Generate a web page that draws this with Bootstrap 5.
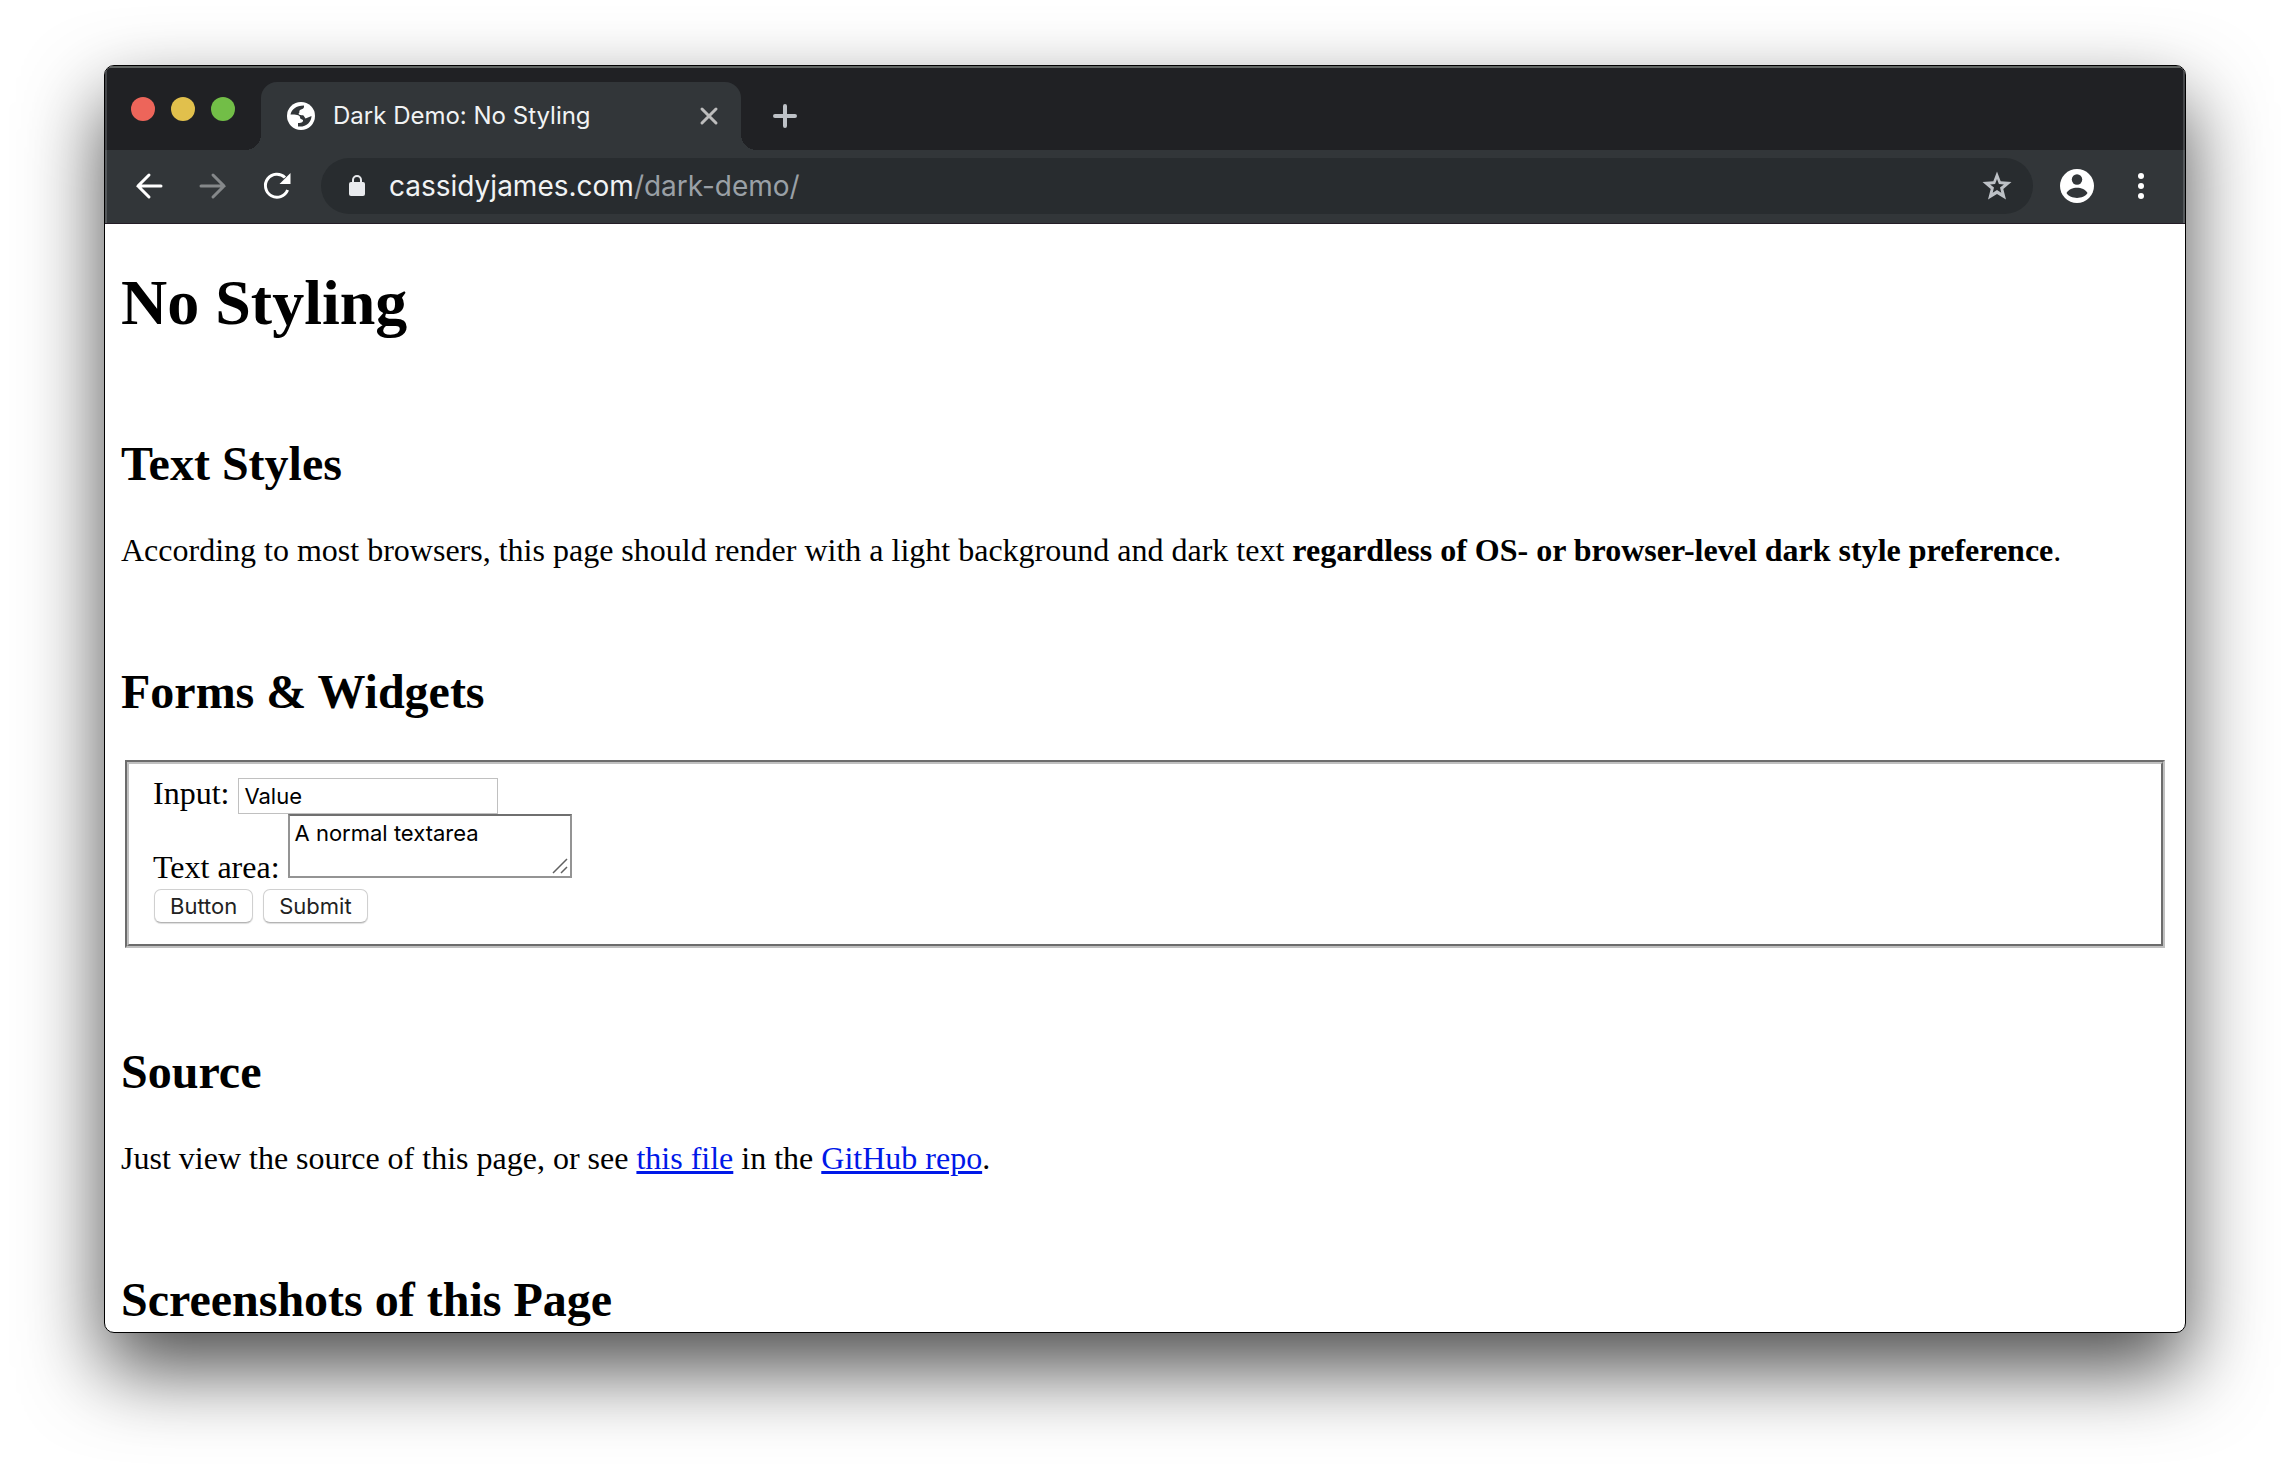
<!DOCTYPE html>
<html lang="en">
<head>
<meta charset="utf-8">
<meta name="viewport" content="width=device-width, initial-scale=1">
<title>Dark Demo: No Styling</title>
<link href="https://cdn.jsdelivr.net/npm/bootstrap@5.3.0/dist/css/bootstrap.min.css" rel="stylesheet">
<style>
body { padding: 65px 104px 137px; background: #fff; font-family: Inter, "Open Sans", sans-serif; }
button { font-family: inherit; }
.browser { border: 1px solid #000; border-radius: 10px; box-shadow: 0 36px 80px rgba(0,0,0,.7); background: #fff; }
.tab-strip { background: #202124; height: 84px; padding-left: 26px; box-shadow: inset 0 2px 0 #626664, inset 2px 0 0 #45474a, inset -2px 0 0 #45474a; }
.lights { gap: 16px; padding-top: 2px; margin-right: 26px; }
.light { width: 24px; height: 24px; border-radius: 50%; border: 0; padding: 0; }
.light-close { background: #ed655a; }
.light-min { background: #e1c04c; }
.light-zoom { background: #72be47; }
.page-tab { position: relative; width: 480px; height: 68px; padding: 0 21px 0 26px; gap: 18px; background: #323639; border-radius: 16px 16px 0 0; color: #f1f3f4; font-size: 24px; }
.page-tab::before, .page-tab::after { content: ""; position: absolute; bottom: 0; width: 16px; height: 16px; }
.page-tab::before { right: 100%; background: radial-gradient(circle at 0 0, transparent 16px, #323639 16px); }
.page-tab::after { left: 100%; background: radial-gradient(circle at 100% 0, transparent 16px, #323639 16px); }
.bare { border: 0; padding: 0; background: none; display: flex; }
.new-tab { height: 68px; align-items: center; margin-left: 32px; }
.toolbar { background: #323639; height: 74px; border-bottom: 1px solid #241c26; padding: 0 32px 1px 28px; box-shadow: inset 2px 0 0 #55595c, inset -2px 0 0 #55595c; }
.nav-icons { gap: 32px; margin-right: 28px; }
.omnibox { height: 56px; border-radius: 28px; background: #282c2f; padding: 0 20px 0 26px; gap: 22px; margin-right: 27px; font-size: 28px; color: #f1f3f4; }
.omnibox .path { color: #9aa0a6; }
.profile { margin-right: 35px; }
.web-page { padding: 42px 16px 0; font-family: "Liberation Serif", serif; font-size: 32px; line-height: 36px; color: #000; }
.web-page h1, .web-page h2 { font-weight: 700; color: #000; }
.web-page h1 { font-size: 64px; line-height: 74px; margin: 0; }
.web-page h2 { font-size: 48px; line-height: 56px; margin: 96px 0 40px; }
.web-page p { margin: 0; }
.web-page a { color: #0018e8; }
.widgets { border: 4px groove #c0c0c0; margin: 0 4px; padding: 11px 24px 24px; height: 188px; }
.widgets input, .widgets textarea, .widgets button { font-family: Inter, "Open Sans", sans-serif; font-size: 22px; color: #000; }
.widgets input { width: 260px; height: 36px; border: 1px solid #c0c0c0; padding: 0 5px; margin-left: 1px; }
.widgets textarea { width: 284px; height: 64px; border: 2px solid #949494; border-top-color: #6f6f6f; padding: 3px 5px; line-height: 28px; resize: none; background: #fff url("data:image/svg+xml,%3Csvg xmlns='http://www.w3.org/2000/svg' width='20' height='20' viewBox='0 0 20 20'%3E%3Cpath d='M3 17L17 3M11 17l6-6' stroke='%23606060' stroke-width='1.500' fill='none'/%3E%3C/svg%3E") no-repeat right bottom; }
.widgets button { height: 34px; padding: 0 15px; margin: 0 1px; border: 1px solid #d0d0d0; border-bottom-color: #b4b4b4; border-radius: 7px; background: #fff; line-height: 30px; color: #222; box-shadow: 0 1px 1px #ddd; }
</style>
<script src="https://cdn.jsdelivr.net/npm/bootstrap@5.3.0/dist/js/bootstrap.bundle.min.js"></script>
</head>
<body class="vh-100 d-flex">
<div class="browser d-flex flex-column flex-grow-1 overflow-hidden">
  <header class="flex-shrink-0">
    <div class="tab-strip d-flex align-items-end">
      <div class="lights d-flex align-self-center">
        <button class="light light-close" aria-label="Close window"></button>
        <button class="light light-min" aria-label="Minimize window"></button>
        <button class="light light-zoom" aria-label="Zoom window"></button>
      </div>
      <div class="page-tab d-flex align-items-center">
        <svg width="28" height="28" viewBox="0 0 28 28" aria-hidden="true"><circle cx="14" cy="14" r="14" fill="#fff"/><path d="M3.500 12.500C4.500 7.500 9 3.500 17 3.500C17.500 6 16 7 14 7.500C11 8.500 13.500 11 11.500 11.500C12 13.500 15 13 16.500 13.500L18.500 16.500L24.500 14C24.500 20 19 25.500 11 24.500L11 21C14 21.500 16.500 20 16 18C15 17 13 17.500 13 15C12.500 13 9 12.500 3.500 12.500z" fill="#323639"/></svg>
        <span class="flex-grow-1">Dark Demo: No Styling</span>
        <button class="bare" aria-label="Close tab"><svg width="22" height="22" viewBox="0 0 22 22" fill="none" stroke="#bdbdbd" stroke-width="3" stroke-linecap="round"><path d="M4 4l14 14M18 4L4 18"/></svg></button>
      </div>
      <button class="bare new-tab" aria-label="New tab"><svg width="24" height="24" viewBox="0 0 24 24" fill="none" stroke="#bdc1c6" stroke-width="4" stroke-linecap="round"><path d="M12 2v20M2 12h20"/></svg></button>
    </div>
    <div class="toolbar d-flex align-items-center">
      <div class="nav-icons d-flex">
        <button class="bare" aria-label="Back"><svg width="32" height="32" viewBox="0 0 32 32" fill="none" stroke="#fff" stroke-width="3" stroke-linecap="round"><path d="M28 16H5M16 5L5 16l11 11"/></svg></button>
        <button class="bare" aria-label="Forward"><svg width="32" height="32" viewBox="0 0 32 32" fill="none" stroke="#85888a" stroke-width="3" stroke-linecap="round"><path d="M4 16h23M16 5l11 11-11 11"/></svg></button>
        <button class="bare" aria-label="Reload"><svg width="32" height="32" viewBox="0 0 32 32" fill="none" stroke="#fff" stroke-width="3"><path d="M26.600 20A11.500 11.500 0 1 1 24 7.500"/><path d="M29.500 3v11H18.500z" fill="#fff" stroke="none"/></svg></button>
      </div>
      <div class="omnibox d-flex align-items-center flex-grow-1">
        <svg width="20" height="24" viewBox="0 0 20 24" aria-hidden="true"><rect x="2" y="8" width="16" height="14" rx="2" fill="#e8eaed"/><path d="M6 9V6a4 4 0 0 1 8 0v3" fill="none" stroke="#e8eaed" stroke-width="2"/></svg>
        <span class="flex-grow-1">cassidyjames.com<span class="path">/dark-demo/</span></span>
        <button class="bare" aria-label="Bookmark this page"><svg width="32" height="32" viewBox="0 0 32 32" fill="#bdc1c6" fill-rule="evenodd"><path d="M16 1.500l3.700 9.700 10.800.900-8.200 7 2.700 10.400-9-5.600-9 5.600 2.700-10.400-8.200-7 10.800-.900zM16 9l-1.900 5-5 .400 3.900 3.200-1.300 5.100 4.300-2.800 4.300 2.800-1.300-5.100 3.900-3.200-5-.400z"/></svg></button>
      </div>
      <button class="bare profile" aria-label="Profile"><svg width="34" height="34" viewBox="0 0 34 34"><circle cx="17" cy="17" r="17" fill="#fff"/><circle cx="17" cy="10.500" r="5.200" fill="#323639"/><path d="M6.500 24c4-7 17-7 21 0-4 6.500-17 6.500-21 0z" fill="#323639"/></svg></button>
      <button class="bare" aria-label="Menu"><svg width="24" height="32" viewBox="0 0 24 32" fill="#fff"><circle cx="12" cy="6" r="3"/><circle cx="12" cy="16" r="3"/><circle cx="12" cy="26" r="3"/></svg></button>
    </div>
  </header>
  <main class="web-page flex-grow-1 overflow-hidden">
    <h1>No Styling</h1>
    <h2>Text Styles</h2>
    <p>According to most browsers, this page should render with a light background and dark text <strong>regardless of OS- or browser-level dark style preference</strong>.</p>
    <h2>Forms &amp; Widgets</h2>
    <form>
      <fieldset class="widgets">
        <div><label for="value-field">Input:</label> <input id="value-field" type="text" value="Value"></div>
        <div><label for="text-field">Text area:</label> <textarea id="text-field">A normal textarea</textarea></div>
        <div><button type="button">Button</button> <button type="submit">Submit</button></div>
      </fieldset>
    </form>
    <h2>Source</h2>
    <p>Just view the source of this page, or see <a href="#">this file</a> in the <a href="#">GitHub repo</a>.</p>
    <h2>Screenshots of this Page</h2>
  </main>
</div>
</body>
</html>
